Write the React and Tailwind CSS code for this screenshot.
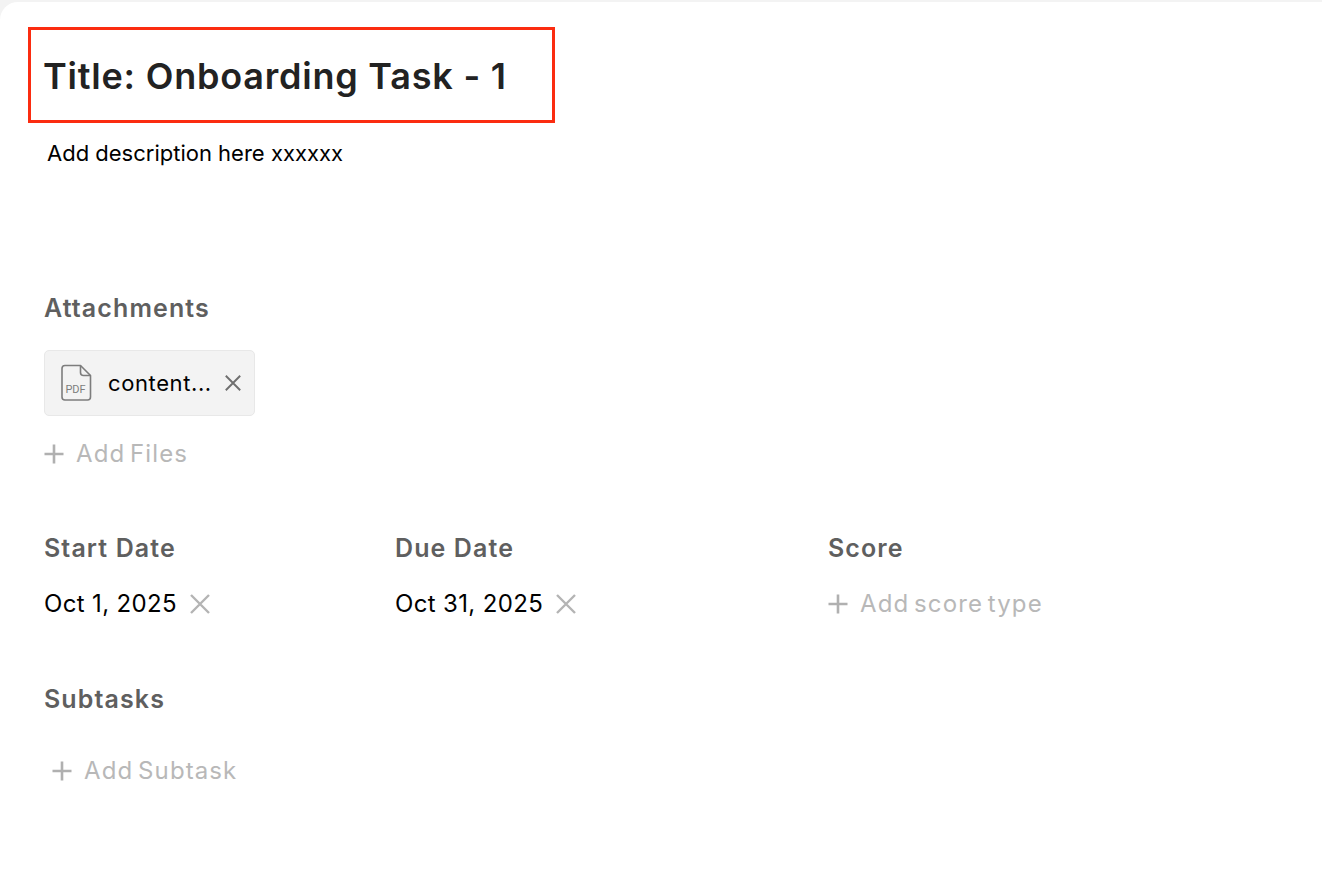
function PdfIcon() {
  return (
    <svg width="32" height="38" viewBox="0 0 32 38" fill="none" className="shrink-0">
      <path
        d="M5 1.5h15.5l10 10V33a3 3 0 0 1-3 3H5a3 3 0 0 1-3-3V4.5a3 3 0 0 1 3-3z"
        stroke="#7d7d7d"
        strokeWidth="1.6"
        strokeLinejoin="round"
      />
      <path d="M20.5 1.5V8.5a3 3 0 0 0 3 3h7" stroke="#7d7d7d" strokeWidth="1.6" strokeLinejoin="round" />
      <text x="15.5" y="29" textAnchor="middle" fontSize="11" fontFamily="Roboto, sans-serif" fill="#7d7d7d">
        PDF
      </text>
    </svg>
  );
}

function CrossIcon({ size, color, strokeWidth = 2.4 }) {
  return (
    <svg width={size} height={size} viewBox="0 0 20 20" fill="none" className="shrink-0">
      <path d="M1 1L19 19M19 1L1 19" stroke={color} strokeWidth={strokeWidth} />
    </svg>
  );
}

function PlusIcon() {
  return (
    <svg width="20" height="20" viewBox="0 0 20 20" fill="none" className="shrink-0">
      <path d="M10 0.5V19.5M0.5 10H19.5" stroke="#b0b0b0" strokeWidth="2.6" />
    </svg>
  );
}

function AddRow({ label, className = '' }) {
  return (
    <div className={`flex items-center gap-[12px] text-[24px] leading-[32px] text-[#b8b8b8] ${className}`}>
      <PlusIcon />
      <span className="tracking-[1.1px] [word-spacing:-3px]">{label}</span>
    </div>
  );
}

function SectionLabel({ children }) {
  return <div className="text-[25px] leading-[32px] font-semibold tracking-[1.1px] text-[#5f5f5f]">{children}</div>;
}

function DateValue({ value }) {
  return (
    <div className="flex items-center gap-[13px] text-[24px] leading-[32px] text-black">
      <span className="tracking-[0.35px]">{value}</span>
      <CrossIcon size={20} color="#b4b4b4" />
    </div>
  );
}

export default function App() {
  return (
    <div className="h-[882px] w-[1322px] overflow-hidden bg-[#f3f3f3] pt-[2px] font-['Inter',sans-serif]">
      <div className="h-[880px] rounded-tl-[18px] bg-white pl-[28px] pt-[25px]">
        <div className="flex h-[96px] w-[527px] items-center border-[3px] border-[#fb2c10] pl-[12px] pt-[2px]">
          <h1 className="text-[36px] font-semibold leading-[44px] tracking-[0.78px] text-[#222222]">
            Title: Onboarding Task - 1
          </h1>
        </div>

        <div className="ml-[19px] mt-[15px] text-[22px] leading-[30px] text-black">Add description here xxxxxx</div>

        <div className="ml-[16px] mt-[124px]">
          <SectionLabel>Attachments</SectionLabel>

          <div className="mt-[26px] flex h-[66px] w-[211px] items-center rounded-[5px] border border-[#e8e8e8] bg-[#f3f3f3] pl-[15px]">
            <PdfIcon />
            <span className="ml-[16px] text-[22px] tracking-[0.6px] text-black">content...</span>
            <span className="ml-[13px]">
              <CrossIcon size={16} color="#6f6f6f" />
            </span>
          </div>

          <AddRow label="Add Files" className="mt-[22px]" />

          <div className="mt-[62px] flex">
            <div className="w-[351px]">
              <SectionLabel>Start Date</SectionLabel>
              <div className="mt-[24px]">
                <DateValue value="Oct 1, 2025" />
              </div>
            </div>
            <div className="w-[433px]">
              <SectionLabel>Due Date</SectionLabel>
              <div className="mt-[24px]">
                <DateValue value="Oct 31, 2025" />
              </div>
            </div>
            <div>
              <SectionLabel>Score</SectionLabel>
              <AddRow label="Add score type" className="mt-[24px]" />
            </div>
          </div>

          <div className="mt-[63px]">
            <SectionLabel>Subtasks</SectionLabel>
            <AddRow label="Add Subtask" className="ml-[8px] mt-[40px]" />
          </div>
        </div>
      </div>
    </div>
  );
}
